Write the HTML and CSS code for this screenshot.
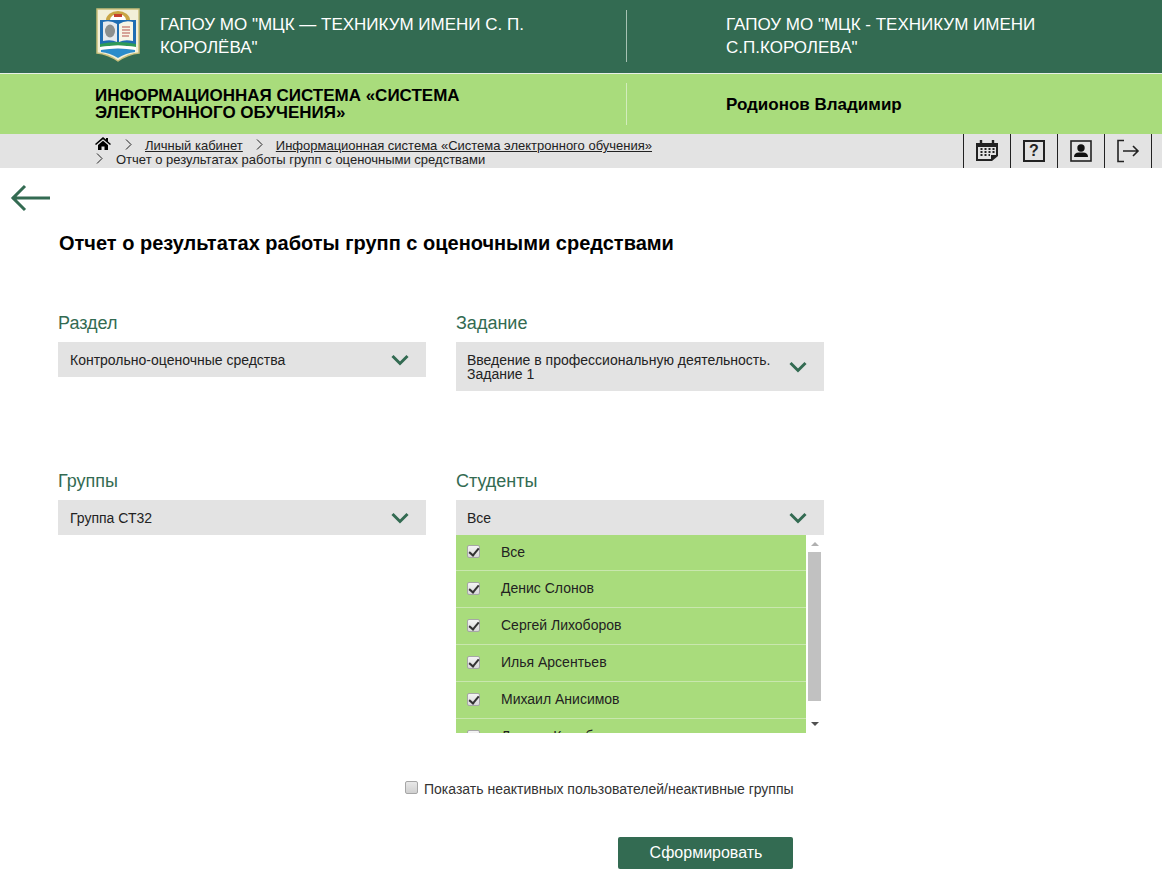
FILE: index.html
```html
<!DOCTYPE html>
<html lang="ru">
<head>
<meta charset="utf-8">
<title>Отчет о результатах работы групп с оценочными средствами</title>
<link rel="stylesheet" href="styles.css">
</head>
<body>
<header class="top">
  <div class="top-left">
    <svg class="logo" viewBox="0 0 44 54" width="44" height="54">
      <path d="M1 1H43V45Q32 46 22 53Q12 46 1 45Z" fill="#f2efd8" stroke="#c9bf7a" stroke-width="1.500"/>
      <path d="M10 12A12 9 0 0 1 34 12Z" fill="#c9a544"/>
      <path d="M14 12A8 6 0 0 1 30 12Z" fill="#fff"/>
      <path d="M18 6H26V9H18Z" fill="#c8402f"/>
      <path d="M4 12H40V36H4Z" fill="#1f6db3"/>
      <path d="M7 14Q15 12 21 16V34Q15 31 7 33Z" fill="#e6eaee"/>
      <path d="M23 16Q29 12 37 14V33Q29 31 23 34Z" fill="#f8f6e6"/>
      <ellipse cx="14" cy="23" rx="5" ry="6.500" fill="#8c8f8e"/>
      <path d="M26 19H34M26 22H34M26 25H34M26 28H33" stroke="#b5534a" stroke-width="1"/>
      <path d="M4 36Q22 32 40 36V39Q22 36 4 39Z" fill="#2f9a57"/>
      <path d="M4 39Q22 36 40 39V42Q22 39 4 42Z" fill="#fff"/>
      <path d="M5 42Q22 39 39 42V44Q30 45 22 50Q14 45 5 44Z" fill="#2b8ccb"/>
    </svg>
    <div class="org">ГАПОУ МО "МЦК — ТЕХНИКУМ ИМЕНИ С. П. КОРОЛЁВА"</div>
  </div>
  <div class="top-right">ГАПОУ МО "МЦК - ТЕХНИКУМ ИМЕНИ С.П.КОРОЛЕВА"</div>
</header>
<div class="sub">
  <div class="sub-left"><div class="system">ИНФОРМАЦИОННАЯ СИСТЕМА «СИСТЕМА ЭЛЕКТРОННОГО ОБУЧЕНИЯ»</div></div>
  <div class="sub-right">Родионов Владимир</div>
</div>
<nav class="crumbs">
  <div class="trail">
    <div class="trail-row">
      <svg class="home" viewBox="0 0 16 13" width="16" height="13"><path d="M8 0L11 2.600V1H13V4.400L16 7L15 8L8 2.200L1 8L0 7Z" fill="#000"/><path d="M3 8L8 3.800L13 8V13H9.500V9.500H6.500V13H3Z" fill="#000"/></svg>
      <svg class="chev-crumb chev-a" viewBox="0 0 7 11" width="7" height="11"><path d="M1 .5L6 5.500L1 10.500" fill="none" stroke="#222"/></svg>
      <a href="#">Личный кабинет</a>
      <svg class="chev-crumb chev-b" viewBox="0 0 7 11" width="7" height="11"><path d="M1 .5L6 5.500L1 10.500" fill="none" stroke="#222"/></svg>
      <a href="#">Информационная система «Система электронного обучения»</a>
    </div>
    <div class="trail-row">
      <svg class="chev-crumb chev-c" viewBox="0 0 7 11" width="7" height="11"><path d="M1 .5L6 5.500L1 10.500" fill="none" stroke="#222"/></svg>
      <span>Отчет о результатах работы групп с оценочными средствами</span>
    </div>
  </div>
  <div class="tools">
    <div class="tool">
      <svg viewBox="0 0 24 22" width="24" height="22"><path d="M1 3H23V16L17 21H1Z" fill="#222"/><path d="M3 7H21V15H16V19H3Z" fill="#e3e3e3"/><path d="M6 0V5M18 0V5" stroke="#222" stroke-width="2.400"/><path d="M5.500 9H7.500M9.500 9H11.500M13.500 9H15.500M17.500 9H19.500M5.500 12H7.500M9.500 12H11.500M13.500 12H15.500M17.500 12H19.500M5.500 15H7.500M9.500 15H11.500M13.500 15H15" stroke="#222" stroke-width="2"/></svg>
    </div>
    <div class="tool"><span class="tool-box">?</span></div>
    <div class="tool">
      <svg viewBox="0 0 22 22" width="22" height="22"><rect x="1" y="1" width="20" height="20" fill="none" stroke="#222" stroke-width="1.600"/><circle cx="11" cy="8" r="3.700" fill="#111"/><path d="M4 17Q4 12.500 9 12.500H13Q18 12.500 18 17Z" fill="#111"/></svg>
    </div>
    <div class="tool">
      <svg viewBox="0 0 24 24" width="24" height="24"><path d="M8 1.500H2V22.500H8" fill="none" stroke="#222" stroke-width="1.600"/><path d="M7 12H22M17 7L22 12L17 17" fill="none" stroke="#222" stroke-width="1.600"/></svg>
    </div>
  </div>
</nav>
<main class="page">
  <a class="back" href="#" aria-label="Назад">
    <svg viewBox="0 0 40 30" width="40" height="30"><path d="M40 15H2M15 3L3 15L15 27" fill="none" stroke="#336b52" stroke-width="3"/></svg>
  </a>
  <h1>Отчет о результатах работы групп с оценочными средствами</h1>
  <div class="filters">
    <section class="field">
      <div class="label">Раздел</div>
      <div class="select"><span>Контрольно-оценочные средства</span><svg class="chev" viewBox="0 0 18 12" width="18" height="12"><path d="M1.500 2L9 9.500L16.500 2" fill="none" stroke="#336b52" stroke-width="3"/></svg></div>
    </section>
    <section class="field">
      <div class="label">Задание</div>
      <div class="select select-tall"><span>Введение в профессиональную деятельность. Задание 1</span><svg class="chev" viewBox="0 0 18 12" width="18" height="12"><path d="M1.500 2L9 9.500L16.500 2" fill="none" stroke="#336b52" stroke-width="3"/></svg></div>
    </section>
    <section class="field">
      <div class="label">Группы</div>
      <div class="select"><span>Группа СТ32</span><svg class="chev" viewBox="0 0 18 12" width="18" height="12"><path d="M1.500 2L9 9.500L16.500 2" fill="none" stroke="#336b52" stroke-width="3"/></svg></div>
    </section>
    <section class="field">
      <div class="label">Студенты</div>
      <div class="select select-open"><span>Все</span><svg class="chev" viewBox="0 0 18 12" width="18" height="12"><path d="M1.500 2L9 9.500L16.500 2" fill="none" stroke="#336b52" stroke-width="3"/></svg></div>
      <div class="list">
        <ul class="options">
          <li><input type="checkbox" checked><span>Все</span></li>
          <li><input type="checkbox" checked><span>Денис Слонов</span></li>
          <li><input type="checkbox" checked><span>Сергей Лихоборов</span></li>
          <li><input type="checkbox" checked><span>Илья Арсентьев</span></li>
          <li><input type="checkbox" checked><span>Михаил Анисимов</span></li>
          <li><input type="checkbox" checked><span>Леонид Калабин</span></li>
        </ul>
        <div class="scroll">
          <i class="arrow arrow-up"></i>
          <b class="thumb"></b>
          <i class="arrow arrow-down"></i>
        </div>
      </div>
    </section>
  </div>
  <label class="inactive"><input type="checkbox"><span>Показать неактивных пользователей/неактивные группы</span></label>
  <div class="actions"><button class="submit" type="button">Сформировать</button></div>
</main>
</body>
</html>
```

FILE: styles.css
```css
* { box-sizing: border-box; }
html, body { margin: 0; padding: 0; }
body {
  font-family: "Liberation Sans", Arial, sans-serif;
  color: #222;
  background: #fff;
  width: 1162px;
  height: 889px;
  overflow: hidden;
}
.top {
  display: flex;
  height: 74px;
  background: #336b52;
  border-bottom: 1px solid #e8efe8;
  color: #fff;
  font-size: 17px;
  line-height: 23px;
}
.top-left {
  width: 627px;
  padding: 8px 0 0 96px;
  display: flex;
  align-items: flex-start;
  position: relative;
}
.top-left::after {
  content: "";
  position: absolute;
  right: 0;
  top: 10px;
  height: 52px;
  border-right: 1px solid #a7c2b3;
}
.logo { flex: none; }
.org { width: 370px; margin: 5px 0 0 20px; }
.top-right { width: 340px; margin: 13px 0 0 99px; }
.sub {
  display: flex;
  height: 60px;
  background: #a9dc7c;
  color: #000;
  font-weight: 700;
}
.sub-left {
  width: 627px;
  padding: 13px 0 0 95px;
  position: relative;
  font-size: 17px;
  line-height: 17px;
}
.sub-left::after {
  content: "";
  position: absolute;
  right: 0;
  top: 9px;
  height: 42px;
  border-right: 1px solid #d3ecbd;
}
.system { width: 400px; }
.sub-right { margin: 22px 0 0 99px; font-size: 17px; line-height: 18px; }
.crumbs {
  display: flex;
  justify-content: space-between;
  height: 34px;
  background: #e3e3e3;
  font-size: 13px;
  line-height: 14px;
  color: #222;
}
.trail { padding: 5px 0 0 95px; white-space: nowrap; }
.trail-row { display: flex; align-items: center; height: 14px; }
.trail a { color: #222; text-decoration: underline; }
.home { flex: none; transform: translateY(-3px); }
.chev-crumb { flex: none; transform: translateY(-2px); }
.chev-a { margin: 0 13px 0 14px; }
.chev-b { margin: 0 13px 0 13px; }
.chev-c { margin: 0 13px 0 1px; }
.tools { display: flex; padding-right: 10px; }
.tool {
  width: 47px;
  height: 34px;
  border-left: 1px solid #222;
  display: flex;
  align-items: center;
  justify-content: center;
}
.tool:last-child { border-right: 1px solid #222; width: 48px; }
.tool-box {
  width: 22px;
  height: 22px;
  border: 2px solid #222;
  font-weight: 700;
  font-size: 16px;
  line-height: 18px;
  text-align: center;
}
.page { position: relative; height: 721px; }
.back { position: absolute; left: 10px; top: 15px; width: 40px; height: 30px; display: block; }
h1 {
  margin: 0;
  padding: 64px 0 0 59px;
  font-size: 20px;
  line-height: 22px;
  font-weight: 700;
  color: #000;
}
.filters {
  display: grid;
  grid-template-columns: 368px 368px;
  grid-template-rows: 158px 276px;
  column-gap: 30px;
  margin: 59px 0 0 58px;
}
.label {
  font-size: 18px;
  line-height: 20px;
  color: #336b52;
  margin-bottom: 9px;
}
.select {
  display: flex;
  align-items: center;
  justify-content: space-between;
  min-height: 35px;
  padding: 0 17px 0 12px;
  background: #e3e3e3;
  font-size: 14px;
  line-height: 14px;
  color: #222;
}
.select-tall { height: 49px; padding-left: 11px; padding-right: 17px; }
.select-tall span { width: 310px; }
.select-open { padding-left: 11px; }
.chev { flex: none; }
.list { position: relative; display: flex; height: 198px; overflow: hidden; }
.options {
  list-style: none;
  margin: 0;
  padding: 0;
  width: 350px;
  background: #a9dc7c;
  font-size: 14px;
  color: #222;
}
.options li {
  display: flex;
  align-items: center;
  height: 37px;
  border-bottom: 1px solid #c9e7ae;
  padding: 0 0 2px 11px;
}
.options li:first-child { height: 36px; }
input[type="checkbox"] {
  appearance: none;
  -webkit-appearance: none;
  position: relative;
  flex: none;
  margin: 0;
  width: 13px;
  height: 13px;
  border: 1px solid #a6a6a6;
  border-radius: 2px;
  background: linear-gradient(#f4f4f4, #d9d9d9);
}
input[type="checkbox"]:checked::after {
  content: "";
  position: absolute;
  left: 3px;
  top: 0;
  width: 4px;
  height: 8px;
  border: solid #333;
  border-width: 0 2px 2px 0;
  transform: rotate(40deg);
}
.options span { margin-left: 21px; }
.scroll {
  width: 18px;
  display: flex;
  flex-direction: column;
  align-items: center;
  background: #fff;
}
.thumb { display: block; width: 13px; height: 149px; background: #c1c1c1; margin-right: 1px; }
.arrow { width: 0; height: 0; border-left: 4px solid transparent; border-right: 4px solid transparent; margin-right: 1px; }
.arrow-up { border-bottom: 4px solid #b0b0b0; margin-top: 7px; margin-bottom: 6px; }
.arrow-down { border-top: 4px solid #505050; margin-top: 21px; }
.inactive {
  position: absolute;
  left: 405px;
  top: 612px;
  display: flex;
  align-items: center;
  font-size: 14px;
  line-height: 18px;
  color: #333;
}
.inactive input { margin: 0 6px 3px 0; background: linear-gradient(#e8e8e8, #d0d0d0); }
.actions { position: absolute; left: 618px; top: 669px; }
.submit {
  width: 175px;
  height: 32px;
  border: 0;
  border-radius: 2px;
  background: #336b52;
  color: #fff;
  font: 16px/32px "Liberation Sans", Arial, sans-serif;
  padding: 0 0 0 1px;
}
```
